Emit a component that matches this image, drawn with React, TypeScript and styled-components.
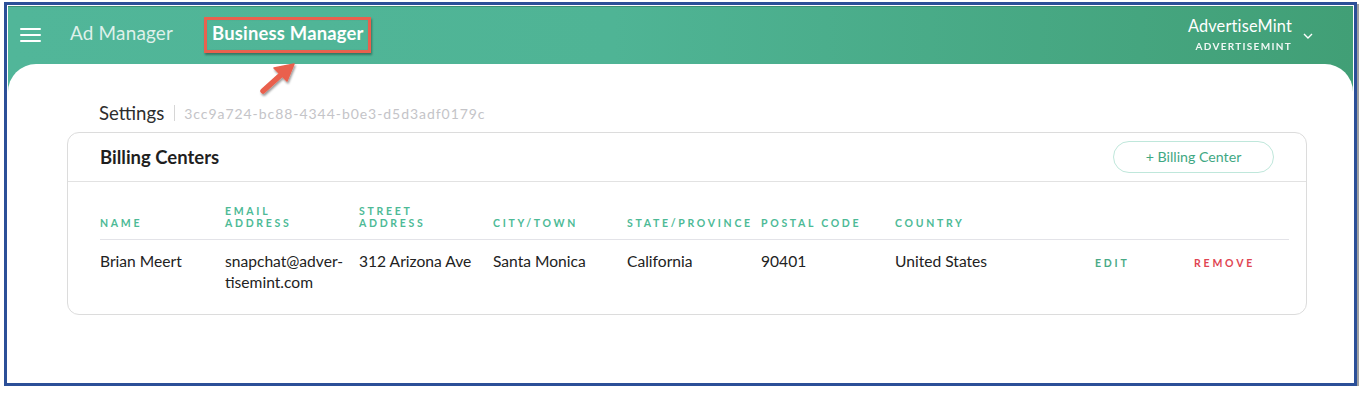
import React from "react";
import styled, { createGlobalStyle } from "styled-components";

const GlobalStyle = createGlobalStyle`
  html, body { margin: 0; padding: 0; background: #ffffff; }
  body { font-family: Lato, "Open Sans", sans-serif; }
  * { box-sizing: border-box; }
`;

const Frame = styled.div`
  margin: 2px 0 0 4px;
  width: 1353px;
  height: 384px;
  border: 3px solid #2b4f98;
  box-shadow: 2px 2px 0 #a0a0a0;
  padding: 1px;
  background: #ffffff;
`;

const Screen = styled.div`
  height: 100%;
  display: flex;
  flex-direction: column;
  background: linear-gradient(90deg, #51b699 0%, #4fb495 45%, #419f76 100%);
  border-top: 1px solid #3e8f74;
`;

const TopBar = styled.header`
  height: 57px;
  display: flex;
  align-items: center;
  padding: 0 40px 5px 12px;
  position: relative;
`;

const Burger = styled.div`
  width: 21px;
  display: flex;
  flex-direction: column;
  gap: 4px;
  margin-right: 29px;
  margin-top: 3px;
  span {
    display: block;
    height: 2px;
    background: #ffffff;
    border-radius: 1px;
  }
`;

const NavItem = styled.div<{ $active?: boolean }>`
  position: relative;
  font-size: ${(p) => (p.$active ? "18.4px" : "18.9px")};
  font-weight: ${(p) => (p.$active ? 700 : 400)};
  color: ${(p) => (p.$active ? "#ffffff" : "rgba(255,255,255,0.82)")};
  margin-right: 39px;
  letter-spacing: 0.2px;
  line-height: 22px;
`;

const Annotation = styled.div`
  position: absolute;
  left: -8px;
  right: -7px;
  top: -5px;
  bottom: -9px;
  border: 3px solid #e9614e;
  box-shadow: 1px 2px 2px rgba(0, 0, 0, 0.35), inset 0 0 1px rgba(0,0,0,0.2);
`;

const Arrow = styled.svg`
  position: absolute;
  left: 238px;
  top: 45px;
  overflow: visible;
  z-index: 5;
`;

const Spacer = styled.div`
  flex: 1;
`;

const Account = styled.div`
  display: flex;
  flex-direction: column;
  align-items: flex-end;
  color: #ffffff;
  margin-top: 3px;
`;

const AccountName = styled.div`
  font-size: 16.3px;
  line-height: 20px;
  letter-spacing: 0.2px;
`;

const AccountSub = styled.div`
  font-size: 10px;
  font-weight: 700;
  letter-spacing: 1.3px;
  line-height: 14px;
  margin-top: 3px;
  opacity: 0.92;
`;

const Chevron = styled.svg`
  margin-left: 11px;
  margin-top: 6px;
`;

const Panel = styled.main`
  flex: 1;
  background: #ffffff;
  border-radius: 28px 28px 0 0;
  padding: 37px 46px 0 59px;
`;

const Crumbs = styled.div`
  display: flex;
  align-items: center;
  padding-left: 32px;
  height: 24px;
`;

const CrumbTitle = styled.span`
  font-size: 18.6px;
  color: #2d2d2d;
`;

const CrumbSep = styled.span`
  width: 1px;
  height: 16px;
  background: #d6d6d6;
  margin: 0 9px 0 10px;
`;

const CrumbId = styled.span`
  font-size: 14px;
  color: #c4c4c8;
  letter-spacing: 0.95px;
`;

const Card = styled.section`
  margin-top: 7px;
  border: 1px solid #dcdcdc;
  border-radius: 12px;
  padding-bottom: 21px;
`;

const CardHead = styled.div`
  height: 49px;
  display: flex;
  align-items: center;
  justify-content: space-between;
  padding: 0 32px;
  border-bottom: 1px solid #e2e2e2;
`;

const CardTitle = styled.h2`
  margin: 0;
  font-size: 18.5px;
  font-weight: 700;
  color: #1f1f1f;
`;

const PillButton = styled.button`
  width: 161px;
  height: 32px;
  border-radius: 16px;
  border: 1px solid #bfe7db;
  background: #ffffff;
  color: #3fa883;
  font-family: inherit;
  font-size: 14.2px;
  margin-top: -1px;
`;

const Table = styled.div`
  margin: 0 17px 0 32px;
`;

const Row = styled.div<{ $head?: boolean }>`
  display: grid;
  grid-template-columns: 125px 134px 134px 134px 134px 134px 200px 99px 1fr;
  align-items: ${(p) => (p.$head ? "end" : "start")};
  border-bottom: ${(p) => (p.$head ? "1px solid #e3e3e8" : "none")};
  padding: ${(p) => (p.$head ? "23px 0 10px" : "11px 0 0")};
`;

const HeadCell = styled.div`
  font-size: 10.5px;
  font-weight: 700;
  letter-spacing: 2.7px;
  line-height: 12px;
  color: #4dba96;
  text-transform: uppercase;
`;

const Cell = styled.div`
  font-size: 15.6px;
  line-height: 21px;
  color: #222222;
`;

const Action = styled.div<{ $danger?: boolean }>`
  font-size: 10.5px;
  font-weight: 700;
  letter-spacing: 2.8px;
  line-height: 21px;
  margin-top: 2px;
  color: ${(p) => (p.$danger ? "#e04552" : "#4aaa86")};
`;

const headers = [
  ["Name"],
  ["Email", "Address"],
  ["Street", "Address"],
  ["City/Town"],
  ["State/Province"],
  ["Postal Code"],
  ["Country"],
];

export default function App() {
  return (
    <>
      <GlobalStyle />
      <Frame>
        <Screen>
          <TopBar>
            <Burger>
              <span />
              <span />
              <span />
            </Burger>
            <NavItem>Ad Manager</NavItem>
            <NavItem $active>
              Business Manager
              <Annotation />
            </NavItem>
            <Arrow width="56" height="44" viewBox="0 0 56 44">
              <defs>
                <filter id="sh" x="-30%" y="-30%" width="160%" height="160%">
                  <feDropShadow dx="1" dy="2" stdDeviation="1.2" floodColor="#000" floodOpacity="0.4" />
                </filter>
              </defs>
              <g filter="url(#sh)" fill="#e9614e" stroke="#e9614e">
                <line x1="17" y1="39" x2="37" y2="21" strokeWidth="5.5" strokeLinecap="round" />
                <polygon points="48,12 28,16 41,29" strokeWidth="1.5" strokeLinejoin="round" />
              </g>
            </Arrow>
            <Spacer />
            <Account>
              <AccountName>AdvertiseMint</AccountName>
              <AccountSub>ADVERTISEMINT</AccountSub>
            </Account>
            <Chevron width="10" height="6" viewBox="0 0 10 6">
              <path d="M1 1l4 4 4-4" fill="none" stroke="#ffffff" strokeWidth="1.4" />
            </Chevron>
          </TopBar>
          <Panel>
            <Crumbs>
              <CrumbTitle>Settings</CrumbTitle>
              <CrumbSep />
              <CrumbId>3cc9a724-bc88-4344-b0e3-d5d3adf0179c</CrumbId>
            </Crumbs>
            <Card>
              <CardHead>
                <CardTitle>Billing Centers</CardTitle>
                <PillButton>+ Billing Center</PillButton>
              </CardHead>
              <Table>
                <Row $head>
                  {headers.map((h) => (
                    <HeadCell key={h.join()}>
                      {h.map((l) => (
                        <div key={l}>{l}</div>
                      ))}
                    </HeadCell>
                  ))}
                </Row>
                <Row>
                  <Cell>Brian Meert</Cell>
                  <Cell>
                    snapchat@adver-
                    <br />
                    tisemint.com
                  </Cell>
                  <Cell>312 Arizona Ave</Cell>
                  <Cell>Santa Monica</Cell>
                  <Cell>California</Cell>
                  <Cell>90401</Cell>
                  <Cell>United States</Cell>
                  <Action>EDIT</Action>
                  <Action $danger>REMOVE</Action>
                </Row>
              </Table>
            </Card>
          </Panel>
        </Screen>
      </Frame>
    </>
  );
}
